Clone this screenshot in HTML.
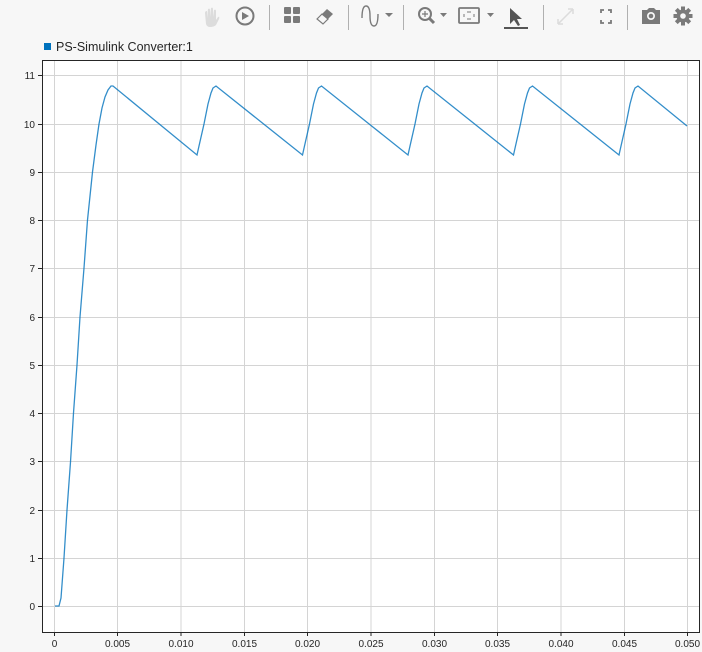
<!DOCTYPE html>
<html><head><style>
html,body{margin:0;padding:0;background:#f7f7f7;width:702px;height:652px;overflow:hidden;font-family:"Liberation Sans",Arial,sans-serif;}
svg{position:absolute;left:0;top:0}
</style></head><body>
<svg width="702" height="652" xmlns="http://www.w3.org/2000/svg">
<!-- toolbar -->
<g fill="#7a7a7a" stroke="none">
 <path d="M206 24 L205 13 Q205 11 207 11 L207 18 L208 9 Q210 8 210 10 L210 17 L211 8 Q213 7 213 9 L213 17 L214 10 Q216 9 216 11 L216 20 L218 17 Q220 16 219 19 L216 25 Q214 27 210 27 Q207 27 206 24Z" fill="#dcdcdc"/>
 <circle cx="245" cy="16" r="8.5" fill="none" stroke="#7a7a7a" stroke-width="2"/>
 <path d="M242 12 L249 16 L242 20Z"/>
 <rect x="269" y="5" width="1" height="25" fill="#b0b0b0"/>
 <rect x="284" y="7" width="7" height="7" rx="1"/><rect x="293" y="7" width="7" height="7" rx="1"/>
 <rect x="284" y="16" width="7" height="7" rx="1"/><rect x="293" y="16" width="7" height="7" rx="1"/>
 <path d="M317 19 L327 9 L333 14 L323 24 Z" fill="#7a7a7a"/>
 <path d="M317 19 L322 14 L328 19 L323 24Z" fill="#f7f7f7" stroke="#7a7a7a" stroke-width="1.2"/>
 <rect x="348" y="5" width="1" height="25" fill="#b0b0b0"/>
 <path d="M362 18 Q362 6 366 6 Q370 6 370 16 Q370 26 374 26 Q378 26 378 14" fill="none" stroke="#7a7a7a" stroke-width="1.4"/>
 <path d="M385 13 L393 13 L389 17Z"/>
 <rect x="403" y="5" width="1" height="25" fill="#b0b0b0"/>
 <circle cx="425" cy="14" r="6" fill="none" stroke="#7a7a7a" stroke-width="2"/>
 <path d="M429 18 L434 23" stroke="#7a7a7a" stroke-width="3"/>
 <path d="M422 14 H428 M425 11 V17" stroke="#7a7a7a" stroke-width="1.2"/>
 <path d="M440 13 L447 13 L443.5 17Z"/>
 <rect x="459" y="8" width="20" height="15" rx="1" fill="none" stroke="#7a7a7a" stroke-width="1.8"/>
 <path d="M467 12 h4 M467 19 h4 M464 14 v3 M474 14 v3" stroke="#7a7a7a" stroke-width="1"/>
 <path d="M487 13 L494 13 L490.5 17Z"/>
 <path d="M510 8 L510 24 L514 20 L518 26 L520 25 L517 19 L522 19Z" fill="#555"/>
 <rect x="504" y="27" width="24" height="2" fill="#555"/>
 <rect x="543" y="5" width="1" height="25" fill="#b0b0b0"/>
 <path d="M558 24 L573 9 M558 24 v-5 M558 24 h5 M573 9 h-5 M573 9 v5" stroke="#dcdcdc" stroke-width="1.5" fill="none"/>
 <path d="M601 13 v-3 h3 M608 10 h3 v3 M611 20 v3 h-3 M604 23 h-3 v-3" stroke="#7a7a7a" stroke-width="1.8" fill="none"/>
 <rect x="627" y="5" width="1" height="25" fill="#b0b0b0"/>
 <path d="M642 10 h5 l2 -2 h5 l2 2 h4 v14 h-18Z"/>
 <circle cx="651" cy="16" r="4" fill="#f7f7f7"/><circle cx="651" cy="16" r="2.3"/>
 <g transform="translate(683,16)">
  <circle r="6.5"/>
  <g>
   <rect x="-2" y="-9.5" width="4" height="19"/>
   <rect x="-2" y="-9.5" width="4" height="19" transform="rotate(45)"/>
   <rect x="-2" y="-9.5" width="4" height="19" transform="rotate(90)"/>
   <rect x="-2" y="-9.5" width="4" height="19" transform="rotate(135)"/>
  </g>
  <circle r="2.8" fill="#f7f7f7"/>
 </g>
</g>
<!-- legend -->
<rect x="44" y="43" width="7" height="7" fill="#0072bd"/>
<text x="56" y="51" font-size="12.5" fill="#262626" font-family="Liberation Sans, Arial, sans-serif">PS-Simulink Converter:1</text>
<!-- axes -->
<rect x="42" y="60" width="658" height="572" fill="#fff"/>
<g stroke="#d4d4d4" stroke-width="1">
 <path d="M54.5 60V632 M117.5 60V632 M181 60V632 M244.5 60V632 M307.5 60V632 M371 60V632 M434.5 60V632 M497.5 60V632 M561 60V632 M624.5 60V632 M687.5 60V632"/>
 <path d="M42 606.5H700 M42 558.5H700 M42 510.5H700 M42 461.5H700 M42 413.5H700 M42 365.5H700 M42 317.5H700 M42 268.5H700 M42 220.5H700 M42 172.5H700 M42 124.5H700 M42 75.5H700"/>
</g>
<path d="M42.5 60V632.5H700" stroke="#262626" stroke-width="1" fill="none"/>
<path d="M42.5 60.5H700 M699.5 60V632" stroke="#262626" stroke-width="1" fill="none"/>
<g stroke="#262626">
 <path d="M38 606.5h4 M38 558.5h4 M38 510.5h4 M38 461.5h4 M38 413.5h4 M38 365.5h4 M38 317.5h4 M38 268.5h4 M38 220.5h4 M38 172.5h4 M38 124.5h4 M38 75.5h4"/>
 <path d="M54.5 632v4 M117.5 632v4 M181 632v4 M244.5 632v4 M307.5 632v4 M371 632v4 M434.5 632v4 M497.5 632v4 M561 632v4 M624.5 632v4 M687.5 632v4"/>
</g>
<g font-size="10" fill="#262626" text-anchor="end" font-family="Liberation Sans, Arial, sans-serif">
 <text x="35" y="610">0</text><text x="35" y="562">1</text><text x="35" y="514">2</text><text x="35" y="465">3</text>
 <text x="35" y="417">4</text><text x="35" y="369">5</text><text x="35" y="321">6</text><text x="35" y="272">7</text>
 <text x="35" y="224">8</text><text x="35" y="176">9</text><text x="35" y="128">10</text><text x="35" y="79">11</text>
</g>
<g font-size="10" fill="#262626" text-anchor="middle" font-family="Liberation Sans, Arial, sans-serif">
 <text x="54.5" y="647">0</text><text x="117.5" y="647">0.005</text><text x="181" y="647">0.010</text><text x="244.5" y="647">0.015</text>
 <text x="307.5" y="647">0.020</text><text x="371" y="647">0.025</text><text x="434.5" y="647">0.030</text><text x="497.5" y="647">0.035</text>
 <text x="561" y="647">0.040</text><text x="624.5" y="647">0.045</text><text x="687.5" y="647">0.050</text>
</g>
<polyline fill="none" stroke="#0072bd" stroke-width="1.3" stroke-opacity="0.8" points="
55,606 59,606 61,598 64,558 67,510 70.5,462 73.5,413 77,365 80,317 84,268 87.5,220 92.5,172 96,145 99,124 102,108 105,97 108,90 111,86 113,86
197,155 199,146 204,124 208,104 211,93 213,88 216,86
302.5,155 304.5,146 309.5,124 313.5,104 316.5,93 318.5,88 321.5,86
408,155 410,146 415,124 419,104 422,93 424,88 427,86
513.5,155 515.5,146 520.5,124 524.5,104 527.5,93 529.5,88 532.5,86
619,155 621,146 626,124 630,104 633,93 635,88 638,86
687,126"/>
</svg>
</body></html>
